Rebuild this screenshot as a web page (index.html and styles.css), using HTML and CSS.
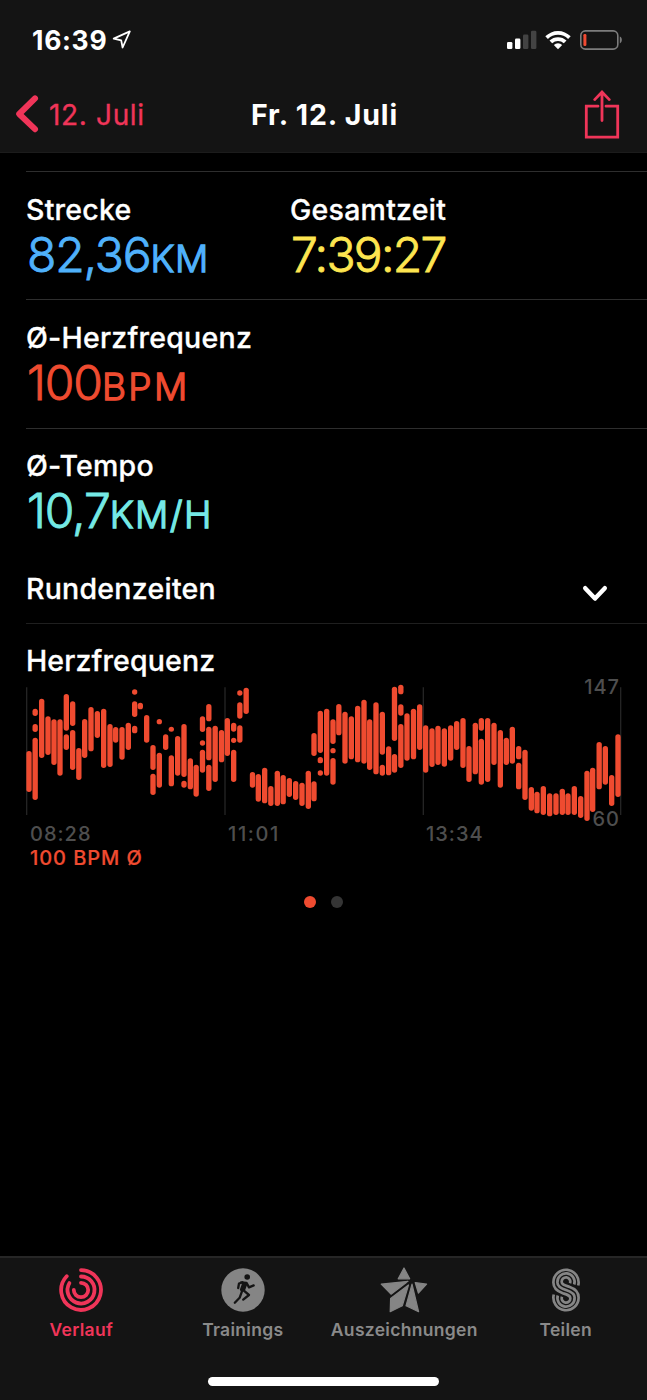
FILE: index.html
```html
<!DOCTYPE html>
<html lang="de">
<head>
<meta charset="utf-8">
<title>Fr. 12. Juli</title>
<link rel="stylesheet" href="styles.css">
</head>
<body>
<div class="screen">
  <header class="top">
    <div class="status">
      <span class="clock">16:39</span>
      <svg class="location" width="20" height="20" viewBox="0 0 20 20"><path d="M1.7 8.6 17.8 1.4 10.6 17.5 9.2 10.3Z"/></svg>
      <span class="spacer"></span>
      <svg class="signal" width="30" height="20" viewBox="0 0 30 20"><rect x="0" y="12" width="5.4" height="7" rx="1.3"/><rect x="8" y="8.5" width="5.4" height="10.5" rx="1.3"/><rect class="off" x="16" y="4.5" width="5.4" height="14.5" rx="1.3"/><rect class="off" x="24" y="0.7" width="5.4" height="18.3" rx="1.3"/></svg>
      <svg class="wifi" width="26" height="20" viewBox="0 0 26 20"><path d="M0.3 6.2A18.2 18.2 0 0 1 25.7 6.2L23.1 8.9A14.5 14.5 0 0 0 2.9 8.9Z"/><path d="M4.5 10.6A12.3 12.3 0 0 1 21.5 10.6L18.8 13.3A8.4 8.4 0 0 0 7.2 13.3Z"/><path d="M8.8 14.9A6.2 6.2 0 0 1 17.2 14.9L13 19.2Z"/></svg>
      <svg class="battery" width="43" height="20" viewBox="0 0 43 20"><rect class="case" x="0.8" y="0.9" width="37" height="18.2" rx="4.6"/><rect class="level" x="3.4" y="4" width="3" height="12" rx="1.2"/><path class="cap" d="M39.8 6.6C42.5 7.6 42.5 12.4 39.8 13.4Z"/></svg>
    </div>
    <nav class="nav">
      <a class="back"><svg width="24" height="40" viewBox="0 0 24 40"><path d="M20 3.4 4.2 19 20 34.2"/></svg><span>12. Juli</span></a>
      <h1 class="title">Fr. 12. Juli</h1>
      <svg class="share" width="36" height="50" viewBox="0 0 36 50"><path d="M14 16.2H2.3V47.2H33.7V16.2H22"/><path d="M18 30.5V2.5M10.7 9.6 18 2 25.3 9.6"/></svg>
    </nav>
  </header>

  <main class="content">
    <section class="row">
      <div class="metric distance"><h2 class="label">Strecke</h2><p class="value">82,36<span class="unit">KM</span></p></div>
      <div class="metric time"><h2 class="label">Gesamtzeit</h2><p class="value">7:39:27</p></div>
    </section>
    <section class="row tall">
      <div class="metric heart"><h2 class="label">Ø-Herzfrequenz</h2><p class="value">100<span class="unit">BPM</span></p></div>
    </section>
    <section class="row pace-row">
      <div class="metric pace"><h2 class="label">Ø-Tempo</h2><p class="value">10,7<span class="unit">KM/H</span></p></div>
    </section>
    <section class="laps">
      <h2 class="label">Rundenzeiten</h2>
      <svg width="26" height="18" viewBox="0 0 26 18"><path d="M3.2 3.2 13 13.6 22.8 3.2"/></svg>
    </section>
    <section class="chart">
      <h2 class="label">Herzfrequenz</h2>
      <div class="plot">
        <svg class="graph" width="596" height="150" viewBox="0 0 1788 450">
          <path class="grid" d="M2 37V420M597 37V420M1192 37V420M1784 37V420"/>
          <g id="bars"></g>
        </svg>
        <span class="max">147</span>
        <span class="min">60</span>
      </div>
      <div class="times"><span>08:28</span><span class="mid">11:01</span><span>13:34</span></div>
      <p class="average">100 BPM Ø</p>
    </section>
    <div class="pages"><i class="dot active"></i><i class="dot"></i></div>
  </main>

  <footer class="bottom">
    <div class="tabs">
      <a class="tab active">
        <svg width="44" height="44" viewBox="0 0 44 44"><g class="rings"><path d="M22 2.1A19.9 19.9 0 1 1 7.7 8.2"/><path d="M22 8.5A13.5 13.5 0 1 1 10.4 15.1"/><path d="M22 14.8A7.2 7.2 0 1 1 14.8 22"/></g></svg>
        <span>Verlauf</span>
      </a>
      <a class="tab">
        <svg width="44" height="44" viewBox="0 0 44 44"><circle cx="22" cy="22" r="21.7"/><circle class="ink" cx="26.2" cy="9" r="2.8"/><path class="ink" d="M19 13.2 25.8 13.8 26.6 15.4 24 22.4 20.5 24.4 18.8 21.8 21 15.5Z"/><path class="limb" d="M21.5 14.3 18 15.5 17.2 20M25.8 15.2 28 19.4 32.7 17.4M22.6 22.4 28 27 22.2 31.6M20.8 23.8 18.6 29.8 13.8 34.7"/></svg>
        <span>Trainings</span>
      </a>
      <a class="tab">
        <svg width="48" height="46" viewBox="0 0 48 46"><path class="solid" d="M24 1 29.7 11.8H18.2Z"/><path class="solid" d="M1.2 17.2 28 14.3 11 27.2Z"/><path class="solid" d="M35.2 15.5 46.6 17.2 38.4 26Z"/><path class="solid" d="M28.5 18 22.3 38.8 10.2 44.7 10.6 31.6Z"/><path class="solid" d="M32 17.2 38.6 44.7 26 38.8Z"/></svg>
        <span>Auszeichnungen</span>
      </a>
      <a class="tab">
        <svg width="30" height="46" viewBox="0 0 30 46"><g class="swirl"><path d="M27.2 18.5A12.6 12.6 0 1 0 2.4 15.5C2.4 21.5 6.5 24.4 11.8 26.2C16.5 27.8 19.3 28.5 19.3 31A4.3 4.3 0 1 1 11 29.8"/><path d="M23.2 17.5A8.6 8.6 0 1 0 6.4 15.5C6.4 19.5 9.5 21.2 15 23C20.5 24.8 23.6 26.5 23.6 30.5A8.6 8.6 0 1 1 6.8 28.5"/><path d="M19 16.2A4.3 4.3 0 1 0 10.7 15C10.7 17.5 13.5 18.2 18.2 19.8C23.5 21.6 27.6 24.5 27.6 30.5A12.6 12.6 0 1 1 2.8 27.5"/></g></svg>
        <span>Teilen</span>
      </a>
    </div>
    <div class="home"></div>
  </footer>
</div>
<script src="chart.js"></script>
</body>
</html>
```
FILE: chart.js
```js
// Each entry: x centre, followed by top/bottom pairs of the measured ranges.
const samples = [
  [9,228,351],[27.5,101,123,147,171,188,375],[47,71,249],[66,124,240],[84,133,270],[102,133,302],
  [121,57,167,178,225],[140,79,153,165,285],[158.5,219,315],[176,132,249],[195,96,229],[214,108,189],
  [233,101,279],[252,147,276],[269,156,203],[288,156,254],[307,143,225],[326,43,59,79,126,152,175],
  [343,83,103],[362,120,203],[381,210,285,296,360],[400,132,148,233,338],[419,178,225],[436,155,170,241,334],
  [455,183,302],[474,147,306,317,338],[493,250,343],[510.5,269,365],[529.5,124,171,196,212,224,293],
  [548.5,87,139,155,256,269,348],[567.5,152,321],[586.5,165,262],[604,129,243],[623,143,170,188,204,224,321],
  [641.5,46,62,82,131,151,203],[660.5,38,117],[679.5,291,338],[697,297,380],[716,278,385],[734.5,333,393],
  [754,287,393],[771.5,300,388],[790,309,366],[809,318,375],[828,323,393],[847,287,402],
  [864,174,243,319,379],[883,107,234,246,265,286,302],[902,101,302],[921,133,207,219,235,249,329],
  [938.5,87,181],[957,110,266],[976,124,253],[995,92,262],[1014,74,266],[1031,133,285],[1050,82,298],
  [1069,110,239,269,302],[1088,214,301],[1105.5,35,198,237,293],[1124.5,29,58,88,122,147,279],
  [1143,115,257],[1162.5,101,253],[1181,88,225],[1199,151,293],[1218,160,276],[1236,152,270],
  [1255,160,275],[1274,151,257],[1292,138,225],[1311,129,279],[1329,213,321],[1348,143,298],
  [1366,129,167,191,329],[1385,129,321],[1404,143,270],[1423,165,338],[1441,188,270],[1459,155,266],
  [1478,213,253,263,343],[1497,224,375],[1516,336,407],[1533,350,415],[1552,333,420],[1571,355,424],
  [1590,355,420],[1609,341,420],[1626,355,420],[1645,333,420],[1664,363,429],[1683,287,438],
  [1700,278,411],[1719.5,201,343],[1738,213,329],[1757,300,393],[1776,178,366]
];
const width = 16;
const group = document.getElementById("bars");
for (const [x, ...ranges] of samples) {
  for (let i = 0; i < ranges.length; i += 2) {
    const bar = document.createElementNS("http://www.w3.org/2000/svg", "rect");
    bar.setAttribute("x", x - width / 2);
    bar.setAttribute("y", ranges[i]);
    bar.setAttribute("width", width);
    bar.setAttribute("height", ranges[i + 1] - ranges[i]);
    bar.setAttribute("rx", width / 2);
    group.appendChild(bar);
  }
}
```
FILE: styles.css
```css
* { box-sizing: border-box; }
body { margin: 0; background: #000; color: #fff; font-family: Inter, "Liberation Sans", sans-serif; }
h1, h2, p { margin: 0; font-weight: inherit; font-size: inherit; }
svg { display: block; flex: none; }

.screen { width: 647px; height: 1400px; display: flex; flex-direction: column; overflow: hidden; }

.top { height: 153px; background: #141414; border-bottom: 1px solid #1c1c1c; }
.status { height: 80px; padding: 0 24px 0 32px; display: flex; align-items: center; }
.clock { font-size: 26.5px; font-weight: 700; letter-spacing: 0.7px; }
.location { margin-left: 5px; fill: none; stroke: #fff; stroke-width: 1.8; stroke-linejoin: round; }
.spacer { flex: 1; }
.signal { fill: #fff; }
.off { fill: #434343; }
.wifi { margin-left: 8px; fill: #fff; }
.battery { margin-left: 9px; }
.case { fill: none; stroke: #7c7c7c; stroke-width: 1.6; }
.level { fill: #f04a32; }
.cap { fill: #7c7c7c; }

.nav { height: 69px; padding: 0 27px 0 15px; display: grid; grid-template-columns: 1fr auto 1fr; align-items: center; font-size: 28px; line-height: 34px; }
.back { display: flex; align-items: center; color: #f03559; letter-spacing: 0.65px; -webkit-text-stroke: 0.3px; }
.back span { margin-left: 10px; }
.back svg { fill: none; stroke: #f03559; stroke-width: 6; stroke-linecap: round; stroke-linejoin: round; }
.title { font-size: 28.5px; font-weight: 700; letter-spacing: 0.85px; transform: translateX(7px); white-space: nowrap; }
.share { justify-self: end; fill: none; stroke: #f03559; stroke-width: 2.8; stroke-linecap: round; }

.content { flex: 1; padding-top: 18px; }
.row { height: 128px; margin-left: 26px; padding-top: 21px; border-top: 1px solid #2e2e2e; display: grid; grid-template-columns: 264px 1fr; }
.tall { height: 129px; }
.pace-row { height: 123px; padding-top: 20px; }
.label { font-size: 28.5px; font-weight: 500; line-height: 34px; letter-spacing: 0.25px; white-space: nowrap; -webkit-text-stroke: 0.3px; }
.value { margin-top: 4px; padding-left: 1px; font-size: 48px; font-weight: 300; line-height: 48px; white-space: nowrap; letter-spacing: -1.1px; -webkit-text-stroke: 0.9px; stroke-linejoin: round; }
.unit { font-size: 37px; letter-spacing: 1.2px; -webkit-text-stroke: 1.3px; }
.distance .value { color: #4fb1fb; }
.distance .unit { letter-spacing: 0.6px; }
.time .value { color: #fde550; letter-spacing: -1.7px; }
.heart .value { color: #ef4b30; }
.heart .unit { letter-spacing: 2.4px; }
.pace .value { color: #74e9e5; }
.pace .unit { letter-spacing: 1.4px; }

.laps { height: 73px; margin-left: 26px; padding: 4px 39px 0 0; border-bottom: 1px solid #1f1f1f; display: flex; align-items: center; justify-content: space-between; }
.laps svg { margin-top: 9px; fill: none; stroke: #fff; stroke-width: 4.4; stroke-linecap: round; stroke-linejoin: round; }

.chart { margin-left: 26px; padding-top: 20px; }
.chart .label { letter-spacing: 0.15px; }
.plot { position: relative; height: 150px; margin-top: -3px; }
#bars { fill: #ef4b30; }
.grid { stroke: #242424; stroke-width: 4; fill: none; }
.max, .min { position: absolute; right: 27px; font-size: 20px; line-height: 24px; font-weight: 500; letter-spacing: 1px; color: #4e4e4e; }
.max { top: 0; }
.min { top: 132px; }
.times { display: grid; grid-template-columns: 198px 198px 1fr; margin-top: -3px; padding-left: 4px; font-size: 20px; line-height: 24px; font-weight: 500; letter-spacing: 1px; color: #4e4e4e; }
.mid { letter-spacing: 1.6px; }
.average { padding-left: 4px; font-size: 20px; line-height: 24px; font-weight: 500; letter-spacing: 0.95px; color: #ef4b30; -webkit-text-stroke: 0.2px; }
.pages { margin-top: 26px; display: flex; justify-content: center; gap: 15px; }
.dot { width: 12px; height: 12px; border-radius: 50%; background: #353535; }
.dot.active { background: #ef4b30; }

.bottom { height: 144px; background: #141414; border-top: 2px solid #262626; }
.tabs { height: 124px; display: grid; grid-template-columns: repeat(4, 161.5px); padding-left: 0.5px; }
.tab { padding-top: 9px; display: flex; flex-direction: column; align-items: center; color: #8a8a8a; font-size: 17.5px; font-weight: 600; line-height: 22px; letter-spacing: 0.3px; }
.tab svg { height: 46px; fill: #858585; }
.tab span { margin-top: 6px; }
.tab.active { color: #f03559; }
.rings { fill: none; stroke: #f03559; stroke-width: 3.8; stroke-linecap: round; }
.ink { fill: #141414; }
.limb { fill: none; stroke: #141414; stroke-width: 2.3; stroke-linecap: round; stroke-linejoin: round; }
.solid { stroke: #858585; stroke-width: 1.2; stroke-linejoin: round; }
.swirl { fill: none; stroke: #858585; stroke-width: 2.7; stroke-linecap: butt; }
.home { width: 231px; height: 9px; margin: -5px auto 0; border-radius: 5px; background: #fff; }
```
